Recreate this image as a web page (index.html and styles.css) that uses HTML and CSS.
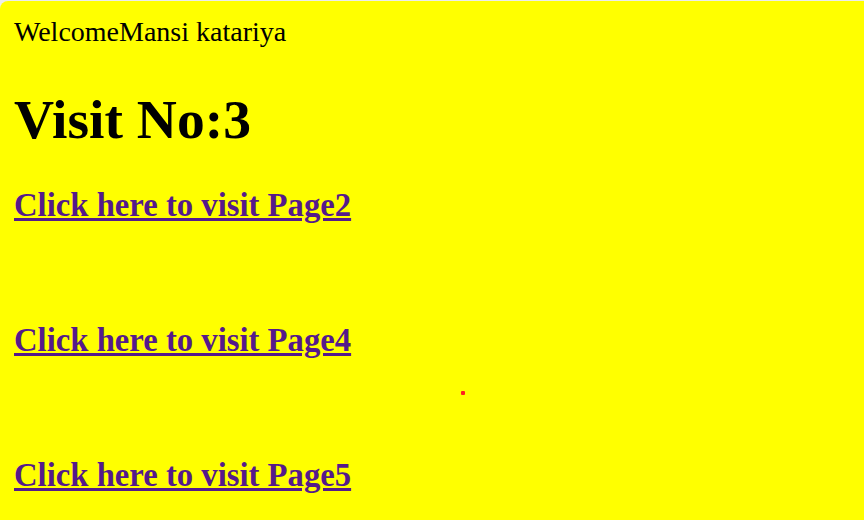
FILE: index.html
```html
<!DOCTYPE html>
<html>
<head>
<meta charset="utf-8">
<title>Visit</title>
<link rel="stylesheet" href="styles.css">
</head>
<body>
<div class="page">
  <div class="welcome">WelcomeMansi katariya</div>
  <h1 class="visit">Visit No:3</h1>
  <h2 class="link-row first"><a href="#" class="visit-link">Click here to visit Page2</a></h2>
  <h2 class="link-row"><a href="#" class="visit-link">Click here to visit Page4</a></h2>
  <h2 class="link-row"><a href="#" class="visit-link">Click here to visit Page5</a></h2>
  <span class="dot"></span>
</div>
</body>
</html>
```
FILE: styles.css
```css
html {
  background: #ececec;
}
body {
  margin: 0;
  font-family: "Liberation Serif", "Times New Roman", serif;
  color: #000;
}
.page {
  position: relative;
  margin-top: 1px;
  background: #ffff00;
  border-top-left-radius: 8px;
  min-height: 519px;
  box-sizing: border-box;
  padding: 15px 14px 0 14px;
  overflow: hidden;
}
.welcome {
  font-size: 28px;
  line-height: 32px;
  margin: 0;
}
.visit {
  font-size: 55.5px;
  line-height: 60px;
  font-weight: bold;
  margin: 42px 0 0 0;
}
.link-row {
  font-size: 32.7px;
  line-height: 38px;
  font-weight: bold;
  margin: 97px 0 0 0;
}
.link-row.first {
  margin-top: 35.5px;
}
.visit-link {
  color: #551a8b;
  text-decoration: underline;
}
.dot {
  position: absolute;
  display: block;
  left: 461px;
  top: 390px;
  width: 4px;
  height: 4px;
  border-radius: 1px;
  background: #ff2020;
}
```
